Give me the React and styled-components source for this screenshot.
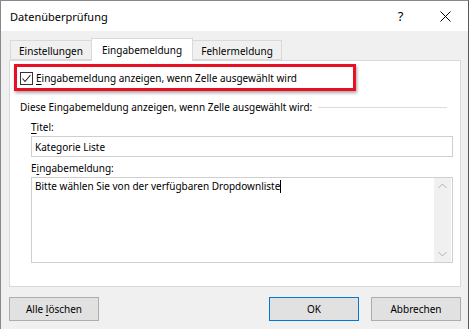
import React from "react";
import styled, { createGlobalStyle } from "styled-components";

const Global = createGlobalStyle`
  html, body { margin: 0; padding: 0; background: #f0f0f0; }
  body { font-family: "Noto Sans", "Open Sans", sans-serif; font-size: 10px; color: #000; }
`;

const Window = styled.div`
  width: 469px;
  height: 329px;
  box-sizing: border-box;
  border: 1px solid #888;
  border-right-color: #555;
  border-bottom: none;
  background: #f0f0f0;
  display: flex;
  flex-direction: column;
  overflow: hidden;
`;

const TitleBar = styled.div`
  height: 30px;
  background: #fff;
  display: flex;
  align-items: center;
  padding-left: 9px;
  flex-shrink: 0;
`;

const Title = styled.div`
  flex: 1;
  font-size: 11px;
  line-height: 16px;
  margin-top: 1px;
`;

const TitleButton = styled.div`
  width: 45px;
  height: 30px;
  display: flex;
  align-items: center;
  justify-content: center;
  font-size: 13px;
`;

const Body = styled.div`
  flex: 1;
  padding: 7px 7px 0 8px;
  display: flex;
  flex-direction: column;
`;

const TabRow = styled.div`
  display: flex;
  align-items: flex-end;
  height: 22px;
  padding-left: 1px;
`;

const Tab = styled.div`
  box-sizing: border-box;
  width: ${(p) => p.$w}px;
  height: ${(p) => (p.$active ? "23px" : "20px")};
  display: flex;
  align-items: center;
  justify-content: center;
  background: ${(p) => (p.$active ? "#fff" : "#f0f0f0")};
  border: 1px solid #d9d9d9;
  border-bottom: ${(p) => (p.$active ? "none" : "1px solid #d9d9d9")};
  margin-left: ${(p) => (p.$first ? "0" : "-1px")};
  position: relative;
  z-index: ${(p) => (p.$active ? 2 : 1)};
  margin-bottom: ${(p) => (p.$active ? "-1px" : "0")};
  line-height: 14px;
  padding-top: ${(p) => (p.$active ? "0" : "1px")};
`;

const Panel = styled.div`
  background: #fff;
  border: 1px solid #d9d9d9;
  height: 227px;
  box-sizing: border-box;
  width: 452px;
  padding: 3px 0 0 4px;
  display: flex;
  flex-direction: column;
  position: relative;
  z-index: 1;
`;

const Highlight = styled.div`
  box-sizing: border-box;
  width: 342px;
  height: 27px;
  border: 3px solid #e81123;
  box-shadow: 1px 2px 3px rgba(0, 0, 0, 0.35);
  display: flex;
  align-items: center;
  padding-left: 3px;
  gap: 3px;
`;

const CheckBox = styled.div`
  width: 13px;
  height: 13px;
  box-sizing: border-box;
  border: 1px solid #333;
  background: #fff;
  display: flex;
  align-items: center;
  justify-content: center;
  margin-top: 1px;
`;

const Label = styled.span`
  line-height: 14px;
  white-space: nowrap;
`;

const Key = styled.span`
  text-decoration: underline;
  text-underline-offset: 2px;
`;

const GroupHeader = styled.div`
  display: flex;
  align-items: center;
  margin: 9px 0 0 6px;
  width: 427px;
  gap: 6px;
  line-height: 14px;
  white-space: nowrap;
`;

const Rule = styled.div`
  flex: 1;
  height: 1px;
  background: #dcdcdc;
  margin-top: 1px;
`;

const FieldLabel = styled.div`
  margin: ${(p) => p.$top || "5px"} 0 0 17px;
  line-height: 14px;
`;

const Input = styled.div`
  box-sizing: border-box;
  margin: 2px 0 0 17px;
  width: 422px;
  height: 21px;
  border: 1px solid #cfcfcf;
  padding-left: 3px;
  display: flex;
  align-items: center;
  line-height: 14px;
`;

const TextArea = styled.div`
  box-sizing: border-box;
  margin: 2px 0 0 17px;
  width: 422px;
  height: 86px;
  border: 1px solid #cfcfcf;
  display: flex;
`;

const TextContent = styled.div`
  flex: 1;
  padding: 1px 0 0 3px;
  line-height: 14px;
`;

const Caret = styled.span`
  display: inline-block;
  width: 1px;
  height: 13px;
  background: #000;
  vertical-align: -3px;
`;

const ScrollBar = styled.div`
  width: 17px;
  background: #f0f0f0;
  margin: 0 1px 0 0;
  display: flex;
  flex-direction: column;
  justify-content: space-between;
  align-items: center;
  padding: 5px 0;
`;

const Footer = styled.div`
  display: flex;
  align-items: center;
  height: 24px;
  margin-top: 10px;
`;

const Button = styled.div`
  box-sizing: border-box;
  width: 90px;
  height: 24px;
  background: #e1e1e1;
  border: 1px solid ${(p) => (p.$default ? "#0078d7" : "#adadad")};
  display: flex;
  align-items: center;
  justify-content: center;
  line-height: 14px;
  margin-left: ${(p) => p.$ml || "0"};
`;

const Spacer = styled.div`
  flex: 1;
`;

const Chevron = ({ up }) => (
  <svg width="9" height="6" viewBox="0 0 9 6">
    <path
      d={up ? "M0.5 5 L4.5 1 L8.5 5" : "M0.5 1 L4.5 5 L8.5 1"}
      fill="none"
      stroke="#b4b4b4"
      strokeWidth="1"
    />
  </svg>
);

export default function App() {
  return (
    <>
      <Global />
      <Window>
        <TitleBar>
          <Title>Datenüberprüfung</Title>
          <TitleButton>?</TitleButton>
          <TitleButton>
            <svg width="11" height="11" viewBox="0 0 11 11">
              <path d="M0.5 0.5 L10.5 10.5 M10.5 0.5 L0.5 10.5" stroke="#000" strokeWidth="1" />
            </svg>
          </TitleButton>
        </TitleBar>
        <Body>
          <TabRow>
            <Tab $first $w={82}>Einstellungen</Tab>
            <Tab $active $w={102}>Eingabemeldung</Tab>
            <Tab $w={90}>Fehlermeldung</Tab>
          </TabRow>
          <Panel>
            <Highlight>
              <CheckBox>
                <svg width="11" height="11" viewBox="0 0 11 11">
                  <path d="M1.5 5.5 L4 8.5 L9.5 2" fill="none" stroke="#222" strokeWidth="1.1" />
                </svg>
              </CheckBox>
              <Label>
                <Key>E</Key>ingabemeldung anzeigen, wenn Zelle ausgewählt wird
              </Label>
            </Highlight>
            <GroupHeader>
              Diese Eingabemeldung anzeigen, wenn Zelle ausgewählt wird:
              <Rule />
            </GroupHeader>
            <FieldLabel $top="6px">
              <Key>T</Key>itel:
            </FieldLabel>
            <Input>Kategorie Liste</Input>
            <FieldLabel $top="4px">
              E<Key>i</Key>ngabemeldung:
            </FieldLabel>
            <TextArea>
              <TextContent>
                Bitte wählen Sie von der verfügbaren Dropdownliste
                <Caret />
              </TextContent>
              <ScrollBar>
                <Chevron up />
                <Chevron />
              </ScrollBar>
            </TextArea>
          </Panel>
          <Footer>
            <Button>
              Alle&nbsp;<Key>l</Key>öschen
            </Button>
            <Spacer />
            <Button $default>OK</Button>
            <Button $ml="12px">Abbrechen</Button>
          </Footer>
        </Body>
      </Window>
    </>
  );
}
